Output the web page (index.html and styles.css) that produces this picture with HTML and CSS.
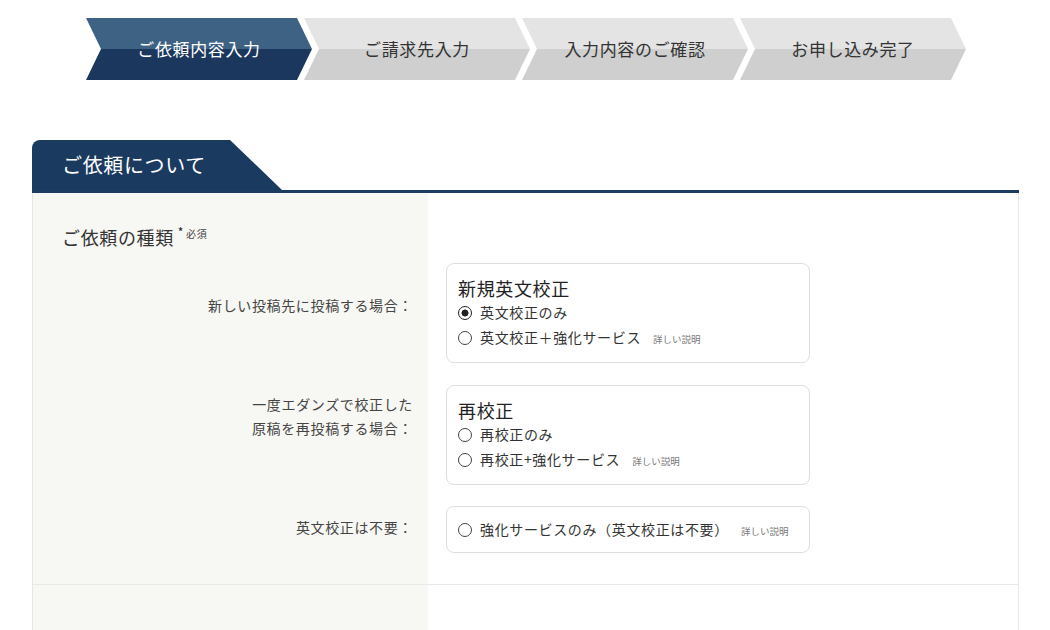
FILE: index.html
```html
<!DOCTYPE html>
<html lang="ja">
<head>
<meta charset="UTF-8">
<title>ご依頼内容入力</title>
<link rel="stylesheet" href="styles.css">
</head>
<body>
<div class="steps">
    <div class="step current">ご依頼内容入力</div>
    <div class="step">ご請求先入力</div>
    <div class="step">入力内容のご確認</div>
    <div class="step">お申し込み完了</div>
</div>
<div class="section">
    <h2 class="section-head"><span class="section-tab">ご依頼について</span></h2>
    <div class="section-body">
        <div class="row">
            <div class="row-title">ご依頼の種類<span class="req">*</span><span class="req-text">必須</span></div>
            <div class="item">
                <div class="label label-new">新しい投稿先に投稿する場合：</div>
                <div class="options">
                    <div class="options-title">新規英文校正</div>
                    <label class="opt"><input type="radio" name="type" checked>英文校正のみ</label>
                    <label class="opt"><input type="radio" name="type">英文校正＋強化サービス<a class="more">詳しい説明</a></label>
                </div>
            </div>
            <div class="item item-wide">
                <div class="label label-re">一度エダンズで校正した<br>原稿を再投稿する場合：</div>
                <div class="options">
                    <div class="options-title">再校正</div>
                    <label class="opt"><input type="radio" name="type">再校正のみ</label>
                    <label class="opt"><input type="radio" name="type">再校正+強化サービス<a class="more">詳しい説明</a></label>
                </div>
            </div>
            <div class="item">
                <div class="label label-none">英文校正は不要：</div>
                <div class="options options-single">
                    <label class="opt"><input type="radio" name="type">強化サービスのみ（英文校正は不要）<a class="more">詳しい説明</a></label>
                </div>
            </div>
        </div>
        <div class="row row-next">
            <div class="item">
                <div class="label"></div>
                <div class="options options-empty"></div>
            </div>
        </div>
    </div>
</div>
</body>
</html>
```

FILE: styles.css
```css
body {
    margin: 0;
    background: #fff;
    color: #333;
    font-family: "Noto Sans CJK JP", "Noto Sans", sans-serif;
    letter-spacing: 0.04em;
}

/* ステップ */
.steps {
    display: flex;
    margin: 18px 0 0 86px;
}
.step {
    width: 226px;
    height: 62px;
    line-height: 62px;
    text-align: center;
    font-size: 17px;
    color: #333;
    background: linear-gradient(180deg, #e4e4e4 0%, #e4e4e4 50%, #cfcfcf 50%, #cfcfcf 100%);
    clip-path: polygon(0 0, calc(100% - 15px) 0, 100% 50%, calc(100% - 15px) 100%, 0 100%, 15px 50%);
}
.step + .step { margin-left: -8px; }
.step.current {
    color: #fff;
    background: linear-gradient(180deg, #3e6284 0%, #3e6284 50%, #1b375d 50%, #1b375d 100%);
}

/* セクション */
.section {
    margin: 60px 0 0 32px;
    width: 987px;
}
.section-head {
    margin: 0;
    height: 50px;
    border-bottom: 3px solid #1d3c62;
    font-weight: normal;
}
.section-tab {
    display: block;
    width: 250px;
    height: 50px;
    line-height: 50px;
    padding-left: 30px;
    box-sizing: border-box;
    background: #1b3a5f;
    color: #fff;
    font-size: 20px;
    border-radius: 8px 0 0 0;
    clip-path: polygon(0 0, 198px 0, 250px 100%, 0 100%);
}
.section-body {
    border-left: 1px solid #e6e6e4;
    border-right: 1px solid #e6e6e4;
}
.row {
    background: linear-gradient(90deg, #f7f7f3 0, #f7f7f3 395px, #fff 395px);
    padding: 32px 0 31px 0;
}
.row-next {
    border-top: 1px solid #e9e9e7;
    padding: 40px 0 0 0;
}
.row-title {
    padding-left: 29px;
    height: 24px;
    font-size: 18px;
    line-height: 24px;
    color: #333;
}
.req { font-size: 12px; line-height: 0; vertical-align: 8px; margin-left: 4px; color: #222; }
.req-text { font-size: 10px; line-height: 0; vertical-align: 7px; margin-left: 2px; color: #444; }

.item {
    display: grid;
    grid-template-columns: 395px 1fr;
    margin-top: 21px;
}
.item-wide { margin-top: 22px; }
.row-title + .item { margin-top: 14px; }
.label {
    text-align: right;
    padding-right: 15px;
    font-size: 14px;
    line-height: 20px;
    color: #444;
}
.label-new { padding-top: 32px; }
.label-re { padding-top: 7px; line-height: 24px; }
.label-none { padding-top: 11px; }

.options {
    width: 364px;
    margin-left: 18px;
    box-sizing: border-box;
    border: 1px solid #dedede;
    border-radius: 8px;
    background: #fff;
    padding: 12px 11px;
}
.options-single { padding: 10px 11px; }
.options-empty { min-height: 100px; }
.options-title {
    font-size: 18px;
    line-height: 24px;
    height: 24px;
    color: #222;
}
.opt {
    display: block;
    height: 25px;
    font-size: 14px;
    line-height: 25px;
    color: #333;
}
.opt input {
    appearance: none;
    width: 14px;
    height: 14px;
    margin: 0 8px 0 0;
    border: 1.3px solid #444;
    border-radius: 50%;
    box-sizing: border-box;
    vertical-align: -2px;
    background: #fff;
}
.opt input:checked {
    border: 1.8px solid #222;
    background: radial-gradient(circle, #222 0, #222 3.2px, #fff 3.8px);
}
.more {
    font-size: 9.5px;
    color: #777;
    margin-left: 12px;
    letter-spacing: 0;
}
```
